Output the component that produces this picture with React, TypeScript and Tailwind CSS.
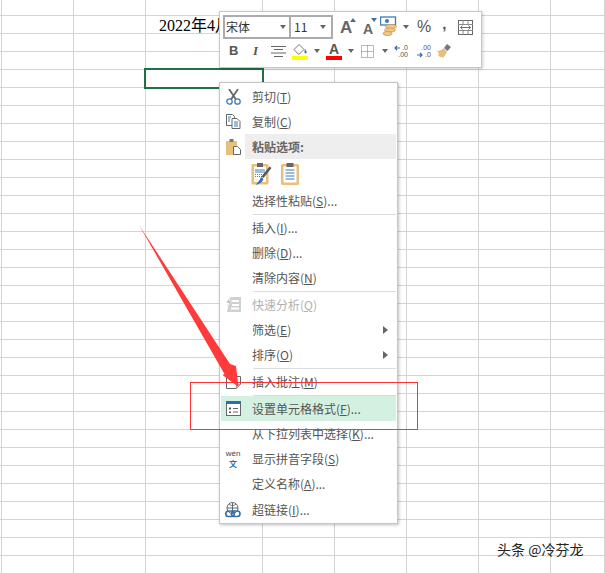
const colWidths = [2, 72, 72, 117, 72, 72, 72, 72, 54];
const rowCount = 32;

const cjk = "font-['Noto_Sans_CJK_SC','Noto_Sans',sans-serif]";

function SheetRow({ className }: { className: string }) {
  return (
    <div className={`flex box-border ${className}`}>
      {colWidths.map((w, i) => (
        <div key={i} className="h-full border-r border-[#d4d4d4] box-border shrink-0" style={{ width: w }} />
      ))}
    </div>
  );
}

function Sheet() {
  return (
    <div className="flex flex-col">
      <SheetRow className="h-[15px]" />
      {Array.from({ length: rowCount }).map((_, r) => (
        <SheetRow key={r} className="h-[18px] border-t border-[#d4d4d4]" />
      ))}
    </div>
  );
}

function Caret({ className = "" }: { className?: string }) {
  return (
    <svg width="6" height="4" viewBox="0 0 6 4" className={`shrink-0 ${className}`}>
      <path d="M0 0h6L3 4z" fill="#666" />
    </svg>
  );
}

function GrowFont({ up }: { up: boolean }) {
  return (
    <div className={`relative flex items-end shrink-0 h-[18px] ${up ? "w-[14px]" : "w-[12px]"}`}>
      <span className={`${up ? "text-[17px]" : "text-[14px]"} font-['Liberation_Sans',sans-serif] font-bold text-[#666] leading-none`}>A</span>
      <svg width="6" height="4" viewBox="0 0 6 4" className="absolute -right-[2px] top-[0px]">
        <path d={up ? "M0 4L3 0l3 4z" : "M0 0h6L3 4z"} fill="#41719c" />
      </svg>
    </div>
  );
}

function CurrencyIcon() {
  return (
    <svg width="17" height="22" viewBox="0 0 17 22" className="shrink-0">
      <rect x="0.500" y="1" width="15" height="8" fill="#fff" stroke="#3d7ab8" strokeWidth="1.300" />
      <circle cx="7" cy="5" r="2" fill="#3d7ab8" />
      <ellipse cx="11" cy="10.500" rx="5.500" ry="2" fill="#f0c98a" stroke="#c98f3c" strokeWidth="0.700" />
      <ellipse cx="10" cy="14" rx="5.500" ry="2" fill="#f0c98a" stroke="#c98f3c" strokeWidth="0.700" />
      <ellipse cx="7.500" cy="17.500" rx="4.500" ry="2" fill="#f0c98a" stroke="#c98f3c" strokeWidth="0.700" />
    </svg>
  );
}

function WrapIcon() {
  return (
    <svg width="15" height="15" viewBox="0 0 15 15" className="shrink-0">
      <rect x="0.500" y="0.500" width="14" height="14" fill="none" stroke="#666" />
      <path d="M0 4.500h15M0 10.500h15M5 0v4M10 0v4M5 11v4M10 11v4" stroke="#888" />
      <path d="M2.500 7.500h10M2.500 7.500l2-2M2.500 7.500l2 2M12.500 7.500l-2-2M12.500 7.500l-2 2" stroke="#3d7ab8" fill="none" />
    </svg>
  );
}

function AlignIcon() {
  return (
    <svg width="15" height="11" viewBox="0 0 15 11" className="shrink-0">
      <path d="M0 .5h15M3 3.500h9M0 7h15M3 10.500h9" stroke="#666" />
    </svg>
  );
}

function FillIcon() {
  return (
    <div className="w-[16px] shrink-0 flex flex-col items-stretch pt-[1px]">
      <svg width="16" height="11" viewBox="0 0 16 11">
        <path d="M2 5.500L7 .5l5 5-4.500 4.500a1 1 0 0 1-1.400 0z" fill="#fff" stroke="#777" />
        <path d="M13 5c1.500 2 2 3 1.500 4-1 1-2.500 0-2-1.500z" fill="#41719c" />
      </svg>
      <div className="h-[4px] mt-[1px] bg-[#ffff00]" />
    </div>
  );
}

function FontColorIcon() {
  return (
    <div className="w-[16px] shrink-0 flex flex-col items-center pt-[1px]">
      <span className="h-[11px] text-[14px] leading-[11px] font-bold text-[#555] font-['Liberation_Sans',sans-serif]">A</span>
      <div className="h-[4px] w-full mt-[1px] bg-[#ff0000]" />
    </div>
  );
}

function BorderIcon() {
  return (
    <svg width="13" height="13" viewBox="0 0 13 13" className="shrink-0">
      <path d="M.5.500h12v12H.5zM6.500 .5v12M.5 6.500h12" fill="none" stroke="#777" strokeDasharray="1 1" />
    </svg>
  );
}

function DecimalIcon({ more }: { more: boolean }) {
  return (
    <div className="w-[14px] h-[14px] shrink-0 flex flex-col font-['Liberation_Sans',sans-serif] text-[7px] text-[#555]">
      <div className="h-[7px] flex items-center justify-end">
        {!more && (
          <svg width="6" height="6" viewBox="0 0 6 6" className="mr-auto">
            <path d="M6 3H1M3 1L1 3l2 2" stroke="#2f6fa8" fill="none" strokeWidth="1.200" />
          </svg>
        )}
        <span className="leading-[7px]">{more ? ".00" : ".0"}</span>
      </div>
      <div className="h-[7px] flex items-center justify-end">
        {more && (
          <svg width="6" height="6" viewBox="0 0 6 6" className="mr-auto">
            <path d="M0 3h5M3 1l2 2-2 2" stroke="#2f6fa8" fill="none" strokeWidth="1.200" />
          </svg>
        )}
        <span className="leading-[7px]">{more ? ".0" : ".00"}</span>
      </div>
    </div>
  );
}

function BrushIcon() {
  return (
    <svg width="14" height="14" viewBox="0 0 14 14" className="shrink-0">
      <path d="M10 0l4 3-3.500 4-3.500-3z" fill="#777" />
      <path d="M0 6.500c2.500.5 4.500 0 6.500-2.500l3.500 3.500c-1 2.500-2.500 4.500-4 6.500l-2-1.500-.5 1L1 11l1-1z" fill="#e6bd80" />
    </svg>
  );
}

function Toolbar() {
  return (
    <div className={`absolute left-[219px] top-[11px] w-[263px] h-[57px] bg-white border border-[#c8c8c8] shadow-[1px_1px_3px_rgba(0,0,0,0.2)] pl-[3px] pt-[3px] ${cjk}`}>
      <div className="flex items-center h-[24px]">
        <div className="w-[68px] h-[24px] shrink-0 border-2 border-[#ababab] flex items-center justify-between pl-[1px] pr-[3px]">
          <span className="text-[12px] text-[#333]">宋体</span>
          <Caret />
        </div>
        <div className="w-[42px] h-[24px] shrink-0 border-2 border-l-0 border-[#ababab] flex items-center justify-between pl-[3px] pr-[5px]">
          <span className="text-[12px] text-[#333]">11</span>
          <Caret />
        </div>
        <div className="ml-[7px]"><GrowFont up /></div>
        <div className="ml-[9px]"><GrowFont up={false} /></div>
        <div className="ml-[5px]"><CurrencyIcon /></div>
        <Caret className="ml-[6px]" />
        <span className="ml-[8px] text-[16px] text-[#555] font-['Liberation_Sans',sans-serif]">%</span>
        <span className="ml-[11px] -translate-y-[4px] text-[15px] font-bold text-[#555] font-['Liberation_Sans',sans-serif] leading-none">,</span>
        <div className="ml-[12px]"><WrapIcon /></div>
      </div>
      <div className="flex items-center h-[18px] mt-[3px] text-[#555]">
        <span className="w-[9px] ml-[6px] shrink-0 text-center text-[13px] font-bold font-['Liberation_Sans',sans-serif]">B</span>
        <span className="w-[7px] ml-[14px] shrink-0 text-center text-[13px] italic font-bold font-['Liberation_Serif',serif]">I</span>
        <div className="ml-[12px]"><AlignIcon /></div>
        <div className="ml-[6px]"><FillIcon /></div>
        <Caret className="ml-[6px]" />
        <div className="ml-[6px]"><FontColorIcon /></div>
        <Caret className="ml-[6px]" />
        <div className="ml-[7px]"><BorderIcon /></div>
        <Caret className="ml-[8px]" />
        <div className="ml-[6px]"><DecimalIcon more={false} /></div>
        <div className="ml-[9px]"><DecimalIcon more /></div>
        <div className="ml-[6px]"><BrushIcon /></div>
      </div>
    </div>
  );
}

const CutIcon = () => (
  <svg width="15" height="16" viewBox="0 0 15 16">
    <path d="M3 0l7 10.500M12 0L5 10.500" stroke="#666" strokeWidth="1.800" fill="none" />
    <circle cx="3.500" cy="12.500" r="2.700" fill="none" stroke="#3d7ab8" strokeWidth="1.300" />
    <circle cx="11.500" cy="12.500" r="2.700" fill="none" stroke="#3d7ab8" strokeWidth="1.300" />
  </svg>
);

const CopyIcon = () => (
  <svg width="15" height="15" viewBox="0 0 15 15">
    <path d="M.5.500h6l2 2v9h-8z" fill="#fff" stroke="#666" />
    <path d="M6 4.500h5l3 3v7H6z" fill="#fff" stroke="#666" />
    <path d="M2 3h3M2 5h2M2 7h2M8 8h4M8 10h4M8 12h4" stroke="#3d7ab8" />
  </svg>
);

const PasteIcon = () => (
  <svg width="15" height="16" viewBox="0 0 15 16">
    <path d="M0 2h11v14H0z" fill="#e8c07d" />
    <path d="M3.500 0h4v3h-4z" fill="#777" />
    <path d="M7.500 7.500h4l3 3v5h-7z" fill="#fff" stroke="#666" />
  </svg>
);

const PasteFormatIcon = () => (
  <svg width="21" height="23" viewBox="0 0 21 23">
    <rect x="0.500" y="2" width="17" height="20.500" rx="1" fill="#e8c07d" />
    <rect x="3" y="4.500" width="12" height="15.500" fill="#fff" />
    <path d="M6 1h6v4H6z" fill="#666" />
    <path d="M4 8h10M4 10h10" stroke="#3d7ab8" />
    <path d="M4 12.500h9M4 14.500h7" stroke="#d94b3d" strokeDasharray="1 1" />
    <path d="M20.500 6l-8 10-2-1.500 8-10z" fill="#555" />
    <path d="M10 15l2.500 2c-1 3-3.500 5-8 6 2-2 4-4 5.500-8z" fill="#2f6fa8" />
  </svg>
);

const PasteTextIcon = () => (
  <svg width="18" height="23" viewBox="0 0 18 23">
    <rect x="0" y="2" width="18" height="21" rx="1.500" fill="#e8c07d" />
    <rect x="2.500" y="4.500" width="13" height="16" fill="#fff" />
    <path d="M5.500 1h7v4h-7z" fill="#666" />
    <path d="M4.500 8h9M4.500 11h9M4.500 14h9M4.500 17h9" stroke="#3d7ab8" />
  </svg>
);

const QuickIcon = () => (
  <svg width="15" height="15" viewBox="0 0 15 15">
    <path d="M4 0h11v15H1z" fill="#d0d0d0" />
    <path d="M6 4h7M6 8h7M5 11.500h8" stroke="#fff" strokeWidth="2" />
    <path d="M4 0L0 6h3l-2 4 5-6H3z" fill="#bbb" stroke="#fff" strokeWidth="0.500" />
  </svg>
);

const CommentIcon = () => (
  <svg width="15" height="13" viewBox="0 0 15 13">
    <path d="M.5.500h14v8l-4 4H.5z" fill="#fff" stroke="#666" />
    <path d="M10.500 12.500v-4h4" fill="#ddd" stroke="#999" />
  </svg>
);

const FormatIcon = () => (
  <svg width="15" height="15" viewBox="0 0 15 15">
    <rect x="0.500" y="0.500" width="14" height="14" fill="#fff" stroke="#666" />
    <rect x="0" y="0" width="15" height="3" fill="#2f6fa8" />
    <path d="M3 6.500h2v2H3zM3 10.500h2v1.500H3z" fill="#555" />
    <path d="M7 7.500h5M7 11h5" stroke="#666" />
  </svg>
);

const PinyinIcon = () => (
  <div className="w-[16px] flex flex-col items-center">
    <span className="text-[8px] leading-[8px] font-['Liberation_Sans',sans-serif] text-[#444]">wén</span>
    <span className={`text-[8px] leading-[9px] mt-[1px] font-bold text-[#2f6fa8] ${cjk}`}>文</span>
  </div>
);

const LinkIcon = () => (
  <svg width="16" height="16" viewBox="0 0 16 16">
    <circle cx="7.500" cy="6" r="5.500" fill="#fff" stroke="#666" />
    <path d="M2 6h11M7.500 .5v11M4 2c2 2 5 2 7 0" stroke="#666" fill="none" />
    <rect x="0.800" y="9" width="8.500" height="5.500" rx="2.700" fill="none" stroke="#2f6fa8" strokeWidth="1.600" />
    <rect x="6.500" y="9" width="8.500" height="5.500" rx="2.700" fill="none" stroke="#2f6fa8" strokeWidth="1.600" />
  </svg>
);

function Item({
  label,
  hotkey,
  tail = "",
  icon,
  sub,
  disabled,
  active,
}: {
  label: string;
  hotkey: string;
  tail?: string;
  icon?: React.ReactNode;
  sub?: boolean;
  disabled?: boolean;
  active?: boolean;
}) {
  return (
    <div className={`h-[25.2px] shrink-0 mx-[1px] flex items-center relative ${active ? "bg-[#d3f0e0]" : ""}`}>
      <div className="w-[24px] flex items-center justify-center">{icon}</div>
      <span className={`ml-[7px] text-[12px] ${disabled ? "text-[#b1b1b1]" : "text-[#555]"}`}>
        {label}(<span className="underline">{hotkey}</span>){tail}
      </span>
      {sub && (
        <svg width="5" height="8" viewBox="0 0 5 8" className="absolute right-[8px] top-[8px]">
          <path d="M0 0l5 4-5 4z" fill="#666" />
        </svg>
      )}
    </div>
  );
}

const Sep = () => <div className="ml-[33px] mr-[1px] h-[1px] my-[0.3px] bg-[#dcdcdc] shrink-0" />;

function ContextMenu() {
  return (
    <div className={`absolute left-[219px] top-[82px] w-[179px] h-[442px] bg-white border border-[#c6c6c6] shadow-[1px_1px_3px_rgba(0,0,0,0.25)] pt-[1px] flex flex-col ${cjk}`}>
      <Item label="剪切" hotkey="T" icon={<CutIcon />} />
      <Item label="复制" hotkey="C" icon={<CopyIcon />} />
      <div className="h-[25px] shrink-0 mx-[1px] flex items-center">
        <div className="w-[24px] flex items-center justify-center"><PasteIcon /></div>
        <div className="flex-1 ml-[0px] h-full bg-[#eeeeee] flex items-center">
          <span className="ml-[7px] text-[12px] font-bold text-[#666]">粘贴选项:</span>
        </div>
      </div>
      <div className="h-[29px] shrink-0 flex items-center gap-[9px] pl-[31px]">
        <PasteFormatIcon />
        <PasteTextIcon />
      </div>
      <Item label="选择性粘贴" hotkey="S" tail="..." />
      <Sep />
      <Item label="插入" hotkey="I" tail="..." />
      <Item label="删除" hotkey="D" tail="..." />
      <Item label="清除内容" hotkey="N" />
      <Sep />
      <Item label="快速分析" hotkey="Q" icon={<QuickIcon />} disabled />
      <Item label="筛选" hotkey="E" sub />
      <Item label="排序" hotkey="O" sub />
      <Sep />
      <Item label="插入批注" hotkey="M" icon={<CommentIcon />} />
      <Sep />
      <Item label="设置单元格格式" hotkey="F" tail="..." icon={<FormatIcon />} active />
      <Item label="从下拉列表中选择" hotkey="K" tail="..." />
      <Item label="显示拼音字段" hotkey="S" icon={<PinyinIcon />} />
      <Item label="定义名称" hotkey="A" tail="..." />
      <Item label="超链接" hotkey="I" tail="..." icon={<LinkIcon />} />
    </div>
  );
}

export default function App() {
  return (
    <div className="relative w-[605px] h-[573px] overflow-hidden bg-white">
      <Sheet />
      <div className="absolute left-[159px] top-[16px] w-[60px] overflow-hidden whitespace-nowrap text-[16px] leading-[20px] text-black font-['Liberation_Serif','Noto_Sans_CJK_SC',serif]">2022年4月</div>
      <div className="absolute left-[144px] top-[68px] w-[120px] h-[21px] border-2 border-[#1f7145]" />
      <Toolbar />
      <ContextMenu />
      <svg width="605" height="573" viewBox="0 0 605 573" className="absolute inset-0 pointer-events-none">
        <path d="M139 225L230 364l6 2 2.500 21-16-12 2-1z" fill="#ff3a3a" />
      </svg>
      <div className="absolute left-[190px] top-[382px] w-[228px] h-[48px] border border-[#ff3333]" />
      <span className={`absolute left-[497px] top-[539px] text-[14px] leading-[20px] text-[#222] ${cjk}`}>头条 @冷芬龙</span>
    </div>
  );
}
